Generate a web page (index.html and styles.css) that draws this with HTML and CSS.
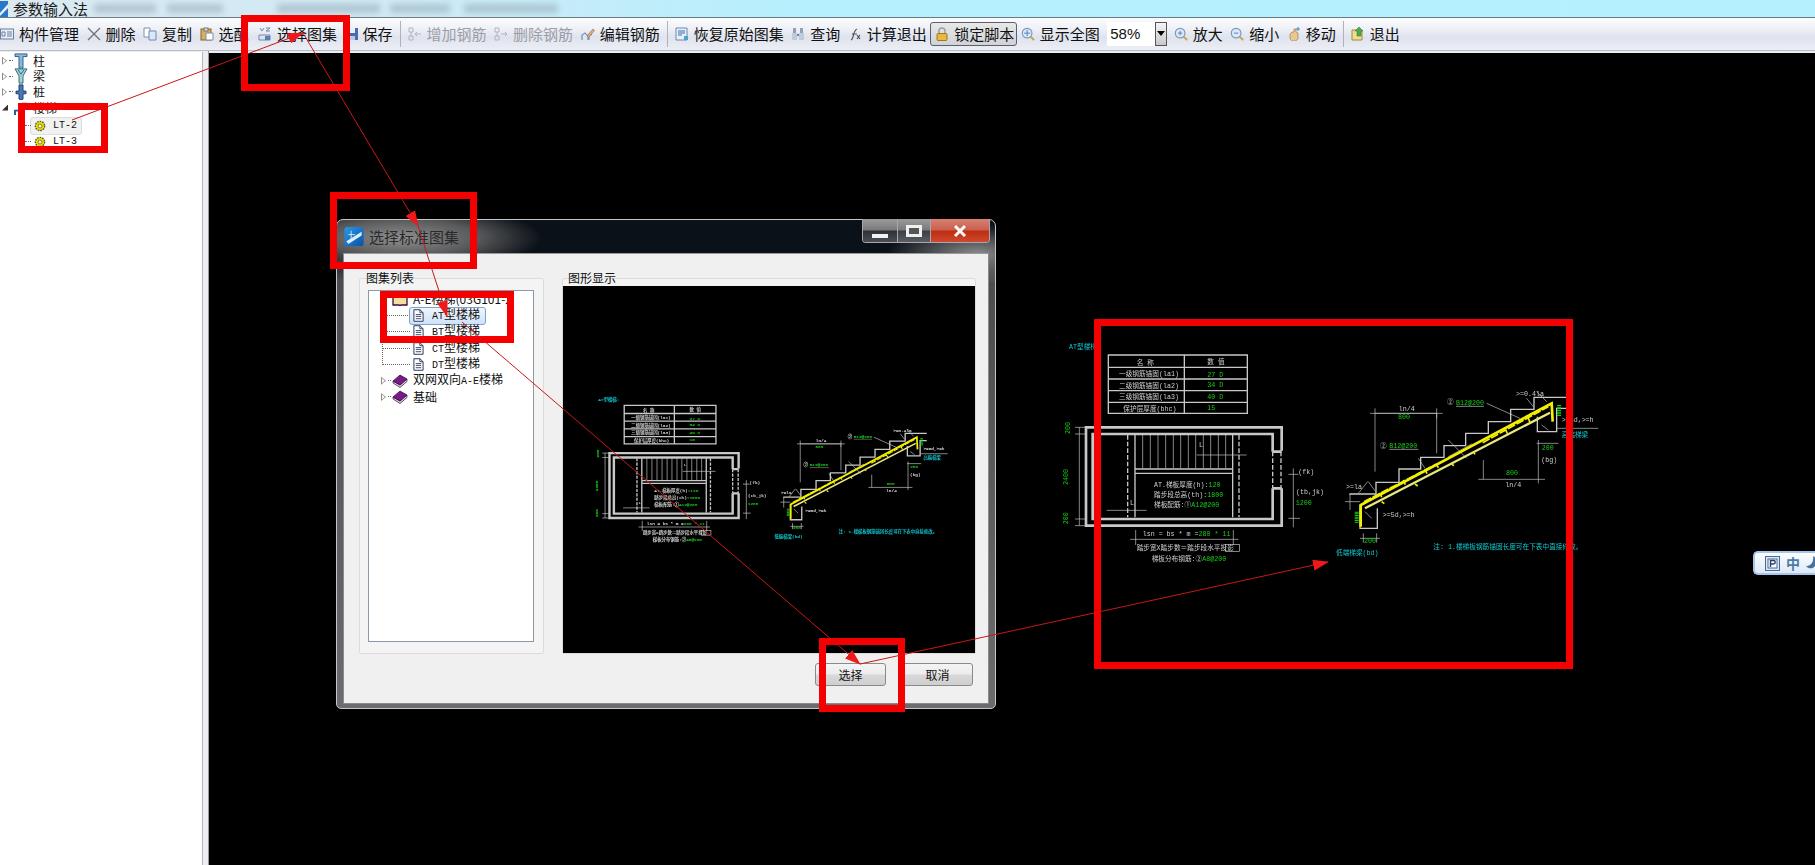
FILE: index.html
```html
<!DOCTYPE html>
<html lang="zh">
<head>
<meta charset="utf-8">
<title>参数输入法</title>
<link rel="stylesheet" href="styles.css">
</head>
<body>
<svg class="defs" width="0" height="0" aria-hidden="true">
  <defs>
    <symbol id="i-gear" viewBox="0 0 12 12"><circle cx="6" cy="6" r="4.6" fill="#e8e020" stroke="#5a5a10" stroke-width="1.4" stroke-dasharray="1.6 1"/><circle cx="6" cy="6" r="2" fill="#fff8a0" stroke="#6a6a10" stroke-width=".8"/></symbol>
    <symbol id="i-file" viewBox="0 0 12 14"><path d="M1 .7h6.5L11 4v9.3H1z" fill="#fff" stroke="#1c2c50" stroke-width="1"/><path d="M7.5 .7V4H11M3 6h6M3 8h6M3 10.500h6" fill="none" stroke="#1c2c50" stroke-width=".9"/></symbol>
    <symbol id="i-book" viewBox="0 0 16 14"><path d="M1 7 8 1l7 4-7 6z" fill="#7a1a8a"/><path d="M1 7v2l7 4.500 7-6V5l-7 6z" fill="#d8d0d8" stroke="#3a0a40" stroke-width=".7"/><path d="M8 1l7 4-7 6-7-4z" fill="none" stroke="#2a0830" stroke-width=".7"/></symbol>
    <symbol id="i-zoom" viewBox="0 0 16 16"><circle cx="7" cy="7" r="5.500" fill="#dce8f8" stroke="#7a96b8" stroke-width="1.300"/><path d="M11 11l4 4" stroke="#c8a050" stroke-width="2.200"/></symbol>
    <marker id="head" markerUnits="userSpaceOnUse" markerWidth="16" markerHeight="11" refX="15" refY="5.500" orient="auto"><path d="M0 0 16 5.500 0 11z" fill="#f01818"/></marker>
  </defs>
</svg>

<div class="app">
  <header class="titlebar">
    <svg class="title-icon" viewBox="0 0 8 16" aria-hidden="true"><rect width="8" height="16" fill="#2a78c8"/><path d="M0 12 8 3v4L0 15z" fill="#e8f4ff"/></svg>
    <span class="title-text">参数输入法</span>
    <span class="title-blur b1"></span><span class="title-blur b2"></span><span class="title-blur b3"></span><span class="title-blur b4"></span><span class="title-blur b5"></span>
  </header>

  <nav class="toolbar">
    <div class="tool"><svg class="ico" viewBox="0 0 14 14"><rect x=".5" y="2" width="13" height="10" fill="#e8eef8" stroke="#6a7f9e"/><path d="M2 5h3v4H2zM7 5h5M7 7h5M7 9h5" fill="none" stroke="#6a7f9e"/></svg><span>构件管理</span></div>
    <div class="tool"><svg class="ico" viewBox="0 0 14 14"><path d="M1 1l12 12M13 1 1 13" stroke="#707070" stroke-width="1.300"/></svg><span>删除</span></div>
    <div class="tool"><svg class="ico" viewBox="0 0 14 14"><path d="M1 1h6v9H1z" fill="#fff" stroke="#8090a8"/><path d="M6 4h7v9H6z" fill="#dce8f8" stroke="#7088b0"/></svg><span>复制</span></div>
    <div class="tool w9"><svg class="ico" viewBox="0 0 14 14"><rect x="1" y="2" width="10" height="11" fill="#d8b060" stroke="#86642c"/><rect x="4" y="1" width="4" height="3" fill="#ddd" stroke="#777"/><path d="M6 6h7v7H6z" fill="#fff" stroke="#8090a8"/></svg><span>选配</span></div>
    <div class="tool"><svg class="ico" viewBox="0 0 14 14"><path d="M2 1l2 3 2-3M8 1h4l-4 3h4M1 8h11v5H1z" fill="none" stroke="#7088a8"/><rect x="7" y="9" width="5" height="4" fill="#5a80b8"/></svg><span>选择图集</span></div>
    <div class="tool tight"><svg class="ico s12" viewBox="0 0 12 14"><path d="M0 1h12v12H0z" fill="#4a6ab0"/><rect x="3" y="1" width="6" height="5" fill="#e8eef8"/><rect x="3" y="9" width="6" height="4" fill="#c0c8d8"/></svg><span>保存</span></div>
    <i class="sep"></i>
    <div class="tool off"><svg class="ico" viewBox="0 0 14 14"><path d="M1 1h4v4H1zM1 9h4v4H1zM3 5v4M7 7h6M9 5 7 7l2 2" fill="none" stroke="#b0b4bc"/></svg><span>增加钢筋</span></div>
    <div class="tool off"><svg class="ico" viewBox="0 0 14 14"><path d="M1 1h4v4H1zM1 9h4v4H1zM3 5v4M7 7h6M11 5l2 2-2 2" fill="none" stroke="#b0b4bc"/></svg><span>删除钢筋</span></div>
    <div class="tool"><svg class="ico" viewBox="0 0 14 14"><path d="M1 13V8l3-2 3 3v4M8 13V9l3-2" fill="none" stroke="#7a98c0" stroke-width="1.300"/><path d="M6 9l6-7 1.500 1.500-6 7z" fill="#e0b070" stroke="#90603a" stroke-width=".6"/></svg><span>编辑钢筋</span></div>
    <i class="sep"></i>
    <div class="tool"><svg class="ico" viewBox="0 0 14 14"><path d="M1 1h11v12H1z" fill="#e8f0fa" stroke="#6a88b0"/><path d="M3 4h7M3 6h7M3 8h4" stroke="#3a6aa8"/><path d="M9 9h4v4H9z" fill="#50a0d0"/></svg><span>恢复原始图集</span></div>
    <div class="tool"><svg class="ico" viewBox="0 0 14 14"><path d="M1 6h5v7H1zM8 6h5v7H8z" fill="#c0cad8"/><path d="M2 1h3v5H2zM9 1h3v5H9z" fill="#8fa0b8"/><path d="M6 7h2v2H6z" fill="#708098"/></svg><span>查询</span></div>
    <div class="tool"><svg class="ico" viewBox="0 0 14 14"><path d="M3 13C6 12 5 3 9 2M4 7h5M9 8l3 4M12 8l-3 4" fill="none" stroke="#505050" stroke-width="1.200"/></svg><span>计算退出</span></div>
    <div class="tool lock"><svg class="ico" viewBox="0 0 14 14"><path d="M4 7V4a3 3 0 0 1 6 0v3" fill="none" stroke="#a0a0a0" stroke-width="1.500"/><rect x="2" y="6.500" width="10" height="7" rx="1" fill="#e8b840" stroke="#a07820"/></svg><span>锁定脚本</span></div>
    <div class="tool"><svg class="ico" viewBox="0 0 16 16"><use href="#i-zoom"/><path d="M7 3.500v7M3.500 7h7" stroke="#4a78b8"/></svg><span>显示全图</span></div>
    <div class="combo"><span>58%</span><b class="combo-btn"><i></i></b></div>
    <div class="tool"><svg class="ico" viewBox="0 0 16 16"><use href="#i-zoom"/><path d="M7 4.500v5M4.500 7h5" stroke="#4a78b8"/></svg><span>放大</span></div>
    <div class="tool"><svg class="ico" viewBox="0 0 16 16"><use href="#i-zoom"/><path d="M4.500 7h5" stroke="#4a78b8"/></svg><span>缩小</span></div>
    <div class="tool"><svg class="ico" viewBox="0 0 14 14"><path d="M3 7v4c0 2 2 3 4 3s4-1 4-3V6L9 5V2H7v3L5 5z" fill="#e8c890" stroke="#a08050" stroke-width=".7"/><path d="M11 0v4M9 2h4" stroke="#5a80b0"/></svg><span>移动</span></div>
    <i class="sep"></i>
    <div class="tool"><svg class="ico" viewBox="0 0 14 14"><path d="M1 3h10v10H1z" fill="#f0dc90" stroke="#a08a40"/><path d="M6 9V4H4l4-4 4 4h-2v5z" fill="#50a848" stroke="#307028" stroke-width=".5"/></svg><span>退出</span></div>
  </nav>

  <main class="workspace">
    <aside class="side">
      <ul class="tree">
        <li class="row"><i class="exp"></i><i class="dots"></i><svg class="node" viewBox="0 0 14 18" preserveAspectRatio="none"><path d="M1 1h12v3H9v13H5V4H1z" fill="#8ab8dc" stroke="#2a5a88"/></svg><span>柱</span></li>
        <li class="row"><i class="exp"></i><i class="dots"></i><svg class="node" viewBox="0 0 14 18" preserveAspectRatio="none"><path d="M1 1h12L9 9v8H5V9z" fill="#a0d0d8" stroke="#2a6a78"/><path d="M4 2l3 5 3-5" fill="none" stroke="#2a6a78"/></svg><span>梁</span></li>
        <li class="row"><i class="exp"></i><i class="dots"></i><svg class="node" viewBox="0 0 14 18" preserveAspectRatio="none"><path d="M5 1h4v7h3v3H9v6l-2 1-2-1v-6H2V8h3z" fill="#4a78b8" stroke="#1a3a68"/></svg><span>桩</span></li>
        <li class="row"><i class="exp open"></i><i class="dots none"></i><svg class="node" viewBox="0 0 14 18" preserveAspectRatio="none"><path d="M1 17V12h4V8h4V4h4" fill="none" stroke="#2a5aa0" stroke-width="2"/></svg><span>楼梯</span></li>
        <li class="row sub sel"><i class="dots"></i><svg class="gear" viewBox="0 0 12 12"><use href="#i-gear"/></svg><span class="mono">LT-2</span></li>
        <li class="row sub"><i class="dots"></i><svg class="gear" viewBox="0 0 12 12"><use href="#i-gear"/></svg><span class="mono">LT-3</span></li>
      </ul>
    </aside>
    <div class="splitter"></div>

    <section class="canvas">
      <svg class="cad cad-main" viewBox="1060 335 540 240" aria-label="AT型楼梯">
        <g id="cad">
          <g transform="translate(1050 310) scale(.33333)">
            <text class="c-c" x="57" y="117">AT型楼梯:</text>
            <path class="g3" d="M175 135h417v175H175zM403 135v175M175 172h417M175 207h417M175 242h417M175 277h417"/>
            <text class="c-w" x="260" y="164">名  称</text><text class="c-w" x="472" y="162">数  值</text>
            <text class="c-w" x="207" y="197">一级钢筋锚固(la1)</text><text class="c-g" x="472" y="200">27 D</text>
            <text class="c-w" x="207" y="233">二级钢筋锚固(la2)</text><text class="c-g" x="472" y="231">34 D</text>
            <text class="c-w" x="207" y="267">三级钢筋锚固(la3)</text><text class="c-g" x="472" y="267">40 D</text>
            <text class="c-w" x="220" y="302">保护层厚度(bhc)</text><text class="c-g" x="472" y="299">15</text>

            <path class="g4" d="M695 422V352H108V647H695V535M668 425V372H128V627H668V535M668 425H695M668 535H695"/>
            <path class="g3 dash" d="M668 425V535M693 425V535M233 375V622M567 375V622"/>
            <path class="g3" d="M255 372V622M548 372V622M255 477H548M255 490H548"/>
            <path class="g1" d="M278 375V475M301 375V475M324 375V475M347 375V475M370 375V475M392 375V475M415 375V475M437 375V475M460 375V475M482 375V475M505 375V475M527 375V475M440 435H590M170 601H290M75 352H105M75 372H105M75 627H105M75 647H105M88 352V647M715 493H745M715 625H750M730 475V652M240 688H565M257 660V705M550 660V705"/>
            <text class="c-w" x="447" y="412">L</text><text class="c-w" x="240" y="584">L</text>
            <text class="c-w" x="312" y="531">AT.梯板厚度(h):<tspan class="c-g">120</tspan></text>
            <text class="c-w" x="312" y="560">踏步段总高(th):<tspan class="c-g">1800</tspan></text>
            <text class="c-w" x="312" y="592">梯板配筋:①<tspan class="c-g">A12@200</tspan></text>
            <text class="c-w" x="278" y="678">lsn = bs * m =<tspan class="c-g">280 * 11</tspan></text>
            <text class="c-w" x="260" y="720">踏步宽X踏步数＝踏步段水平投影</text>
            <rect class="g1" x="526" y="703" width="43" height="22"/>
            <text class="c-w" x="305" y="752">梯板分布钢筋:②<tspan class="c-g">A8@200</tspan></text>
            <text class="c-g" transform="translate(60 372) rotate(-90)">200</text>
            <text class="c-g" transform="translate(55 525) rotate(-90)">2400</text>
            <text class="c-g" transform="translate(55 643) rotate(-90)">200</text>
            <text class="c-w" x="745" y="491">(fk)</text><text class="c-w" x="738" y="551">(tb,jk)</text><text class="c-g" x="737" y="586">1200</text>
          </g>
          <g transform="translate(1300 370) scale(.33333)">
            <path class="g3" d="M148 372H228V337H297V297H362V262H432V227H497V190H565V155H632V118H702V82H800M180 405V475H232V415M712 140V185H770V115H800"/>
            <path class="g1" d="M225 130H410V250M225 115V305M210 130H428M410 115V145M550 270V328M535 328H735M715 210V340M710 220H775M180 505H240M190 490V518M230 490V518M560 100 660 145M355 265 375 295M445 210 500 265M445 260 515 222M150 372V420M135 395H180M680 85l20 25M710 65l30 30M205 335l22 30M175 370l28-35M195 425l20 20M725 165l20 15M770 175H895"/>
            <path class="ye" d="M182 470V405L755 100 758 155"/>
            <path class="ye2" d="M195 415 750 128"/>
            <path class="ye1" d="M192 395 408 283 418 297M548 218 745 110M240 368l5 14M310 330l6 14M375 298l6 13M617 180l6 12M685 145l5 12M455 280l6 8M520 245l5 8M245 395l8 6M345 342l8 6"/>
            <path class="g-b" d="M170 425V460M777 105V140"/>
            <text class="c-w" x="138" y="356">&gt;=la</text>
            <text class="c-w" x="248" y="440">&gt;=5d,&gt;=h</text>
            <text class="c-w" x="648" y="78">&gt;=0.4la</text>
            <text class="c-w" x="785" y="157">&gt;=5d,&gt;=h</text>
            <text class="c-w" x="296" y="122">ln/4</text><text class="c-g" x="294" y="148">800</text>
            <text class="c-w" x="240" y="233">②</text><text class="c-g" x="268" y="233">B12@200</text><path class="g-g" d="M268 238H355"/>
            <text class="c-w" x="441" y="103">②</text><text class="c-g" x="468" y="104">B12@200</text><path class="g-g" d="M468 109H552"/>
            <text class="c-g" x="618" y="316">800</text><text class="c-w" x="616" y="350">ln/4</text>
            <text class="c-g" x="725" y="241">200</text><text class="c-w" x="724" y="275">(bg)</text>
            <text class="c-g" x="192" y="518">200</text>
            <text class="c-c" x="108" y="556">低端梯梁(bd)</text>
            <text class="c-c" x="785" y="200">高端梯梁</text>
            <text class="c-c" x="400" y="537">注: 1.楼梯板钢筋锚固长度可在下表中直接修改。</text>
          </g>
        </g>
      </svg>

      <div class="dialog">
        <div class="dlg-title">
          <svg class="dlg-icon" viewBox="0 0 20 20" aria-hidden="true"><defs><linearGradient id="dg" x1="0" y1="0" x2="1" y2="1"><stop offset="0" stop-color="#2a9ae8"/><stop offset="1" stop-color="#0a50a8"/></linearGradient></defs><rect width="20" height="20" rx="3" fill="url(#dg)"/><path d="M2 15 18 5v4L4 18z" fill="#d8f0ff"/><path d="M7 4v9M4 8h7" stroke="#cfe8ff"/></svg>
          <span class="dlg-caption">选择标准图集</span>
          <div class="win-btns">
            <div class="wb wb-min"><i></i></div>
            <div class="wb wb-max"><i></i></div>
            <div class="wb wb-close"><svg viewBox="0 0 14 12"><path d="M2 1l10 10M12 1 2 11" stroke="#f8f8f8" stroke-width="3"/></svg></div>
          </div>
        </div>
        <div class="dlg-client">
          <div class="dlg-panels">
            <fieldset class="group group-list">
              <legend>图集列表</legend>
              <ul class="dtree">
                <li class="drow"><i class="exp open"></i><svg class="book" viewBox="0 0 16 14"><path d="M1 1h6l1 1 1-1h6v12H9l-1 1-1-1H1z" fill="#f0e0a0" stroke="#3a0a40" stroke-width="1.300"/></svg><span>A-E楼梯(03G101-2</span></li>
                <li class="drow child sel"><i class="ddots"></i><svg class="file" viewBox="0 0 12 14"><use href="#i-file"/></svg><span class="txt"><em>AT</em>型楼梯</span></li>
                <li class="drow child"><i class="ddots"></i><svg class="file" viewBox="0 0 12 14"><use href="#i-file"/></svg><span class="txt"><em>BT</em>型楼梯</span></li>
                <li class="drow child"><i class="ddots"></i><svg class="file" viewBox="0 0 12 14"><use href="#i-file"/></svg><span class="txt"><em>CT</em>型楼梯</span></li>
                <li class="drow child"><i class="ddots"></i><svg class="file" viewBox="0 0 12 14"><use href="#i-file"/></svg><span class="txt"><em>DT</em>型楼梯</span></li>
                <li class="drow"><i class="exp"></i><i class="dots short"></i><svg class="book" viewBox="0 0 16 14"><use href="#i-book"/></svg><span>双网双向<em>A-E</em>楼梯</span></li>
                <li class="drow"><i class="exp"></i><i class="dots short"></i><svg class="book" viewBox="0 0 16 14"><use href="#i-book"/></svg><span>基础</span></li>
              </ul>
            </fieldset>
            <fieldset class="group group-view">
              <legend>图形显示</legend>
              <div class="preview">
                <svg class="cad" viewBox="1015.600 174.200 624.200 556" aria-hidden="true"><use href="#cad"/></svg>
              </div>
            </fieldset>
          </div>
          <div class="dlg-actions">
            <button class="btn" type="button">选择</button>
            <button class="btn" type="button">取消</button>
          </div>
        </div>
      </div>

      <div class="ime">
        <svg class="ime-p" viewBox="0 0 15 15" aria-hidden="true"><rect x=".5" y=".5" width="14" height="14" fill="#dce6f4" stroke="#4a6a94"/><rect x="3" y="3" width="9" height="9" fill="#fff" stroke="#4a6a94"/><path d="M5.500 11V4.500h3a1.700 1.700 0 0 1 0 3.500h-3" fill="none" stroke="#23406a" stroke-width="1.400"/></svg>
        <span class="ime-zh">中</span>
        <svg class="ime-moon" viewBox="0 0 10 16" aria-hidden="true"><path d="M7 1C8 7 5 11 0 11c3 4 10 3 10-4 0-3-1-5-3-6z" fill="#46709e"/></svg>
      </div>
    </section>
  </main>

  <svg class="notes" viewBox="0 0 1815 865" aria-hidden="true">
    <g class="note-box">
      <rect x="21.500" y="106.500" width="83" height="43"/>
      <rect x="244.500" y="18.500" width="102" height="69"/>
      <rect x="333.500" y="195.500" width="140" height="70"/>
      <rect x="383.500" y="294.500" width="127" height="45"/>
      <rect x="822.500" y="641.500" width="79" height="67"/>
      <rect x="1097.500" y="322.500" width="472" height="343"/>
    </g>
    <g class="note-line">
      <path d="M72 120 303 33" marker-end="url(#head)"/>
      <path d="M303 33 418 226" marker-end="url(#head)"/>
      <path d="M418 226 447 316" marker-end="url(#head)"/>
      <path d="M462 322 860 664" marker-end="url(#head)"/>
      <path d="M860 664 1328 562" marker-end="url(#head)"/>
    </g>
  </svg>
</div>
</body>
</html>
```

FILE: styles.css
```css
* { box-sizing: border-box; }
html, body { margin: 0; height: 100%; overflow: hidden; }
body { font-family: "Noto Sans CJK SC", "Liberation Sans", sans-serif; color: #111; background: #000; }
ul { list-style: none; margin: 0; padding: 0; }
.defs { position: absolute; }

.app { position: relative; width: 1815px; height: 865px; display: flex; flex-direction: column; }

/* window title */
.titlebar {
  height: 18px; flex: none; display: flex; align-items: center;
  background: linear-gradient(90deg, #dbe9f1 0, #cfeaf5 400px, #b6effd 800px, #b4f1ff 100%);
  border-bottom: 1px solid #6d7a86;
}
.title-icon { width: 8px; height: 16px; flex: none; }
.title-text { margin-left: 5px; font-size: 15px; line-height: 16px; width: 81px; color: #1a1a1a; flex: none; }
.title-blur { height: 9px; background: #9cb2c0; filter: blur(3px); opacity: .65; flex: none; }
.b1 { width: 62px; }
.b2 { width: 56px; margin-left: 11px; }
.b3 { width: 103px; margin-left: 54px; }
.b4 { width: 60px; margin-left: 10px; }
.b5 { width: 94px; margin-left: 14px; }

/* toolbar */
.toolbar {
  position: relative;
  height: 33px; flex: none; display: flex; align-items: center; gap: 7.500px;
  background: linear-gradient(180deg, #fbfcfd 0, #eef0f6 35%, #dfe3ee 60%, #eceef4 100%);
  border-bottom: 1px solid #b8bcc4; padding-bottom: 1px;
  font-size: 15px; line-height: 20px; white-space: nowrap;
}
.tool { display: flex; align-items: center; gap: 5px; flex: none; }
.tool.w9 { margin-right: 2px; }
.tool.tight { gap: 5px; margin-left: 1px; }
.ico { width: 14px; height: 14px; flex: none; }
.ico.s12 { width: 12px; }
.off { color: #9a9ea6; }
.sep { width: 1px; height: 26px; background: #aeb2ba; flex: none; margin: 0 -.500px; }
.lock {
  height: 24px; padding: 0 2px 0 4px; margin: 0 -4px;
  border: 1px solid #5a6070; border-radius: 3px;
  background: linear-gradient(180deg, #e8e8e8, #d0d2d8);
}
.combo {
  width: 60px; height: 24px; flex: none; display: flex; align-items: center; justify-content: space-between;
  background: #fff; padding-left: 3px; font-family: "Liberation Sans", sans-serif; font-size: 15px; margin-right: -1px;
}
.combo-btn {
  width: 12px; height: 24px; display: flex; align-items: center; justify-content: center;
  background: linear-gradient(180deg, #f4f4f4, #c8c8c8); border: 1px solid #555;
}
.combo-btn i { border: 4px solid transparent; border-top: 5px solid #000; border-bottom: 0; }

/* work area */
.workspace { flex: 1; display: flex; min-height: 0; background: #ecedf0; }
.side { width: 203px; flex: none; background: #fff; border-right: 1px solid #b4b6ba; margin-top: 1px; padding-top: 1px; }
.splitter { width: 6px; flex: none; background: #eceef2; border-right: 1px solid #9a9a9a; }
.canvas { flex: 1; position: relative; background: #000; margin-top: 2px; }

.tree { font-size: 12px; line-height: 16px; }
.row { display: flex; align-items: center; height: 15.600px; padding-left: 2px; }
.exp { width: 5px; height: 8px; flex: none; background: #8a8a8a; clip-path: polygon(0 0, 100% 50%, 0 100%); position: relative; }
.exp::after { content: ""; position: absolute; left: 1px; top: 1.500px; width: 2.800px; height: 5px; background: #fff; clip-path: polygon(0 0, 100% 50%, 0 100%); }
.exp.open { width: 6px; height: 6px; background: #333; clip-path: polygon(100% 0, 100% 100%, 0 100%); }
.exp.open::after { display: none; }
.dots { width: 4px; border-top: 1px dotted #666; margin: 0 1px 0 2px; flex: none; }
.dots.none { border: 0; width: 3px; }
.node { width: 14px; height: 16px; flex: none; margin-right: 5px; }
.row.sub { height: 16px; padding-left: 25px; position: relative; }
.row.sub.sel { margin-top: 2.600px; }
.row.sub .dots { width: 6px; margin: 0 3px 0 0; }
.gear { width: 12px; height: 12px; flex: none; margin-right: 7px; }
.mono { font-family: "Liberation Mono", monospace; font-size: 10px; }
.row.sel::before {
  content: ""; position: absolute; left: 30px; width: 50px; top: -1px; height: 16px; z-index: 0;
  background: #f1f1f1; border: 1px solid #dcdcdc; border-radius: 3px;
}
.row.sel > * { position: relative; z-index: 1; }

.cad { display: block; filter: blur(.3px); }
.cad-main { position: absolute; left: 851px; top: 282px; width: 540px; height: 240px; }
.cad text { font-family: "Liberation Mono", "Noto Sans CJK SC", monospace; font-size: 20px; }
.c-w { fill: #d0d0d0; stroke: #d0d0d0; stroke-width: var(--ts, 0); }
.c-g, .cad tspan.c-g { fill: #16d016; stroke: #16d016; stroke-width: var(--ts, 0); }
.c-c { fill: #10c8d0; stroke: #10c8d0; stroke-width: var(--ts, 0); }
.g1, .g3, .g4, .ye, .ye1, .ye2, .g-g, .g-b { fill: none; }
.g1 { stroke: #c8c8c8; stroke-width: var(--w1, 2); }
.g3 { stroke: #c8c8c8; stroke-width: var(--w3, 4); }
.g4 { stroke: #c8c8c8; stroke-width: var(--w4, 8); }
.dash { stroke-dasharray: 14 6; }
.ye { stroke: #f4f000; stroke-width: 8; }
.ye1 { stroke: #f4f000; stroke-width: 5; stroke-dasharray: 24 5; }
.ye2 { stroke: #e8e880; stroke-width: 7; }
.g-g { stroke: #c8c8c8; stroke-width: 2; }
.g-b { stroke: #10d010; stroke-width: 12; stroke-dasharray: 3 2; }

/* dialog window */
.dialog {
  position: absolute; left: 127px; top: 166px; width: 660px; height: 490px;
  display: flex; flex-direction: column; padding: 0 6px 4px 6px;
  border: 1px solid #c6c6c6; border-radius: 7px 7px 5px 5px;
  background:
    radial-gradient(ellipse 140px 34px at 65px 18px, rgba(150,150,150,.95) 0, rgba(105,105,105,.8) 55%, transparent 100%),
    radial-gradient(ellipse 90px 30px at 640px 34px, rgba(170,170,170,.8) 0, transparent 100%),
    linear-gradient(180deg, #0b1118 0, #0b1118 34px, #4a4c50 60px, #6a6c70 100%);
}
.dlg-title { height: 33px; flex: none; display: flex; align-items: center; position: relative; }
.dlg-icon { width: 20px; height: 19px; margin-left: 1px; flex: none; }
.dlg-caption { margin-left: 5px; font-size: 15px; color: #2a2a2a; }
.win-btns { position: absolute; right: -1px; top: -1px; display: flex; height: 24px; border: 1px solid #a8a8a8; border-top: 0; border-radius: 0 0 4px 4px; overflow: hidden; }
.wb { display: flex; align-items: center; justify-content: center; border-right: 1px solid #a8a8a8; }
.wb-min { width: 35px; background: linear-gradient(180deg, #9a9a9a, #7a7a7a 48%, #2c3038 52%, #4a4e54); align-items: flex-end; padding-bottom: 4px; }
.wb-min i { width: 16px; height: 4px; background: #f2f2f2; }
.wb-max { width: 33px; background: linear-gradient(180deg, #9a9a9a, #7a7a7a 48%, #3a3e46 52%, #5a5e64); }
.wb-max i { width: 16px; height: 12px; border: 3px solid #f0f0f0; background: #555; }
.wb-close { width: 58px; border: 0; background: linear-gradient(180deg, #d88070, #c86050 48%, #c02c10 52%, #cc4a30); }
.wb-close svg { width: 14px; height: 12px; }
.dlg-client {
  flex: 1; min-height: 0; display: flex; flex-direction: column; background: #f0f0f0;
  border: 1px solid #8a8a8a; border-top-color: #9a9a9a;
}
.dlg-panels { display: flex; height: 376px; margin: 24px 0 0 15px; gap: 18px; flex: none; }
.group { margin: 0; padding: 0; background: #f4f4f4; border: 1px solid #dcdcdc; border-radius: 2px; min-width: 0; position: relative; }
.group legend { position: absolute; top: -9px; font-size: 12px; line-height: 16px; padding: 0; color: #111; background: transparent; }
.group-list { width: 185px; padding: 11px 9px 10px 8px; }
.group-list legend { left: 6px; }
.group-view { width: 414px; padding: 7px 0 0 0; }
.group-view legend { left: 5px; }
.preview { width: 412px; height: 367px; background: #000; overflow: hidden; --w1: 3; --w3: 6; --w4: 11; --ts: .7; }
.preview .cad { width: 412px; height: 367px; }
.dtree { height: 352px; background: #fff; border: 1px solid #8d99a6; font-size: 12px; line-height: 16px; overflow: hidden; position: relative; }
.dtree::before { content: ""; position: absolute; left: 12.500px; top: 14px; height: 58px; border-left: 1px dotted #666; }
.drow { display: flex; align-items: center; height: 16.300px; padding-left: 12px; white-space: nowrap; position: relative; }
.drow em { font-style: normal; font-family: "Liberation Mono", monospace; font-size: 10px; }
.drow .exp.open { margin-right: 5px; }
.drow .dots.short { width: 3px; margin: 0 1px 0 2px; }
.book { width: 16px; height: 14px; flex: none; margin-right: 5px; }
.child { padding-left: 13px; }
.ddots { width: 28px; flex: none; margin-right: 3px; border-top: 1px dotted #666; }
.file { width: 11px; height: 13px; flex: none; margin-right: 8px; }
.child .txt { display: block; }
.sel > .file, .sel > .txt { position: relative; z-index: 1; }
.child.sel::before {
  content: ""; position: absolute; left: 40px; width: 75px; top: 0; height: 16px;
  background: linear-gradient(180deg, #f0f6fd, #cfe2f8); border: 1px solid #7da2ce; border-radius: 3px;
}
.dlg-actions { display: flex; justify-content: flex-end; gap: 16px; margin: 9px 15px 0 0; }
.btn {
  width: 71px; height: 23px; padding: 0; font: 12px/20px "Noto Sans CJK SC", sans-serif; color: #111;
  border: 1px solid #8a8a8a; border-radius: 3px;
  background: linear-gradient(180deg, #f4f4f4 0, #ececec 48%, #d8d8d8 52%, #cfcfcf 100%);
}

.ime {
  position: absolute; right: 0; top: 498px; width: 62px; height: 24px;
  display: flex; align-items: center; padding-left: 10px;
  background: linear-gradient(180deg, #fbfdff, #dfe9f6); border: 2px solid #a8c6ea; border-right: 0; border-radius: 5px 0 0 5px;
}
.ime-p { width: 15px; height: 15px; flex: none; }
.ime-zh { margin-left: 6px; font-size: 14px; font-weight: 700; color: #4d7aa6; line-height: 16px; }
.ime-moon { width: 10px; height: 16px; margin-left: 6px; flex: none; }

/* hand-drawn annotations over the screenshot */
.notes { position: absolute; left: 0; top: 0; width: 1815px; height: 865px; pointer-events: none; z-index: 10; }
.note-box rect { fill: none; stroke: #f40000; stroke-width: 7; }
.note-line path { fill: none; stroke: #c81818; stroke-width: 1; }
```
